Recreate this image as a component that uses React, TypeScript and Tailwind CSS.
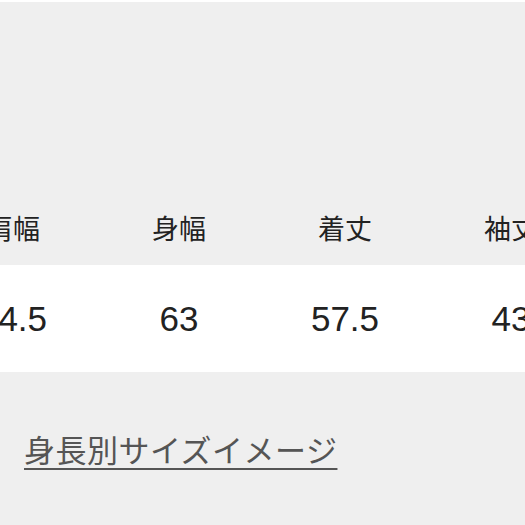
import React from "react";

const columns = [
  { label: "肩幅", value: "44.5" },
  { label: "身幅", value: "63" },
  { label: "着丈", value: "57.5" },
  { label: "袖丈", value: "43" },
];

const font = { fontFamily: '"Liberation Sans", "Noto Sans CJK JP", sans-serif' };

export default function App() {
  return (
    <div
      className="w-[525px] h-[525px] overflow-hidden bg-[#efefef] border-t-2 border-white text-[#222]"
      style={font}
    >
      <div className="mt-[193px] ml-[-70px] w-[664px]">
        <div className="flex h-[70px] items-center">
          {columns.map((c) => (
            <div key={c.label} className="w-[166px] text-center text-[27px] leading-none">
              {c.label}
            </div>
          ))}
        </div>
        <div className="flex h-[107px] items-center bg-white">
          {columns.map((c) => (
            <div key={c.label} className="w-[166px] text-center text-[35px] leading-none">
              {c.value}
            </div>
          ))}
        </div>
      </div>
      <div className="mt-[64px] pl-[24px]">
        <a className="text-[31px] leading-none text-[#555] underline decoration-2 underline-offset-[6px] tracking-[0.5px]">
          身長別サイズイメージ
        </a>
      </div>
    </div>
  );
}
